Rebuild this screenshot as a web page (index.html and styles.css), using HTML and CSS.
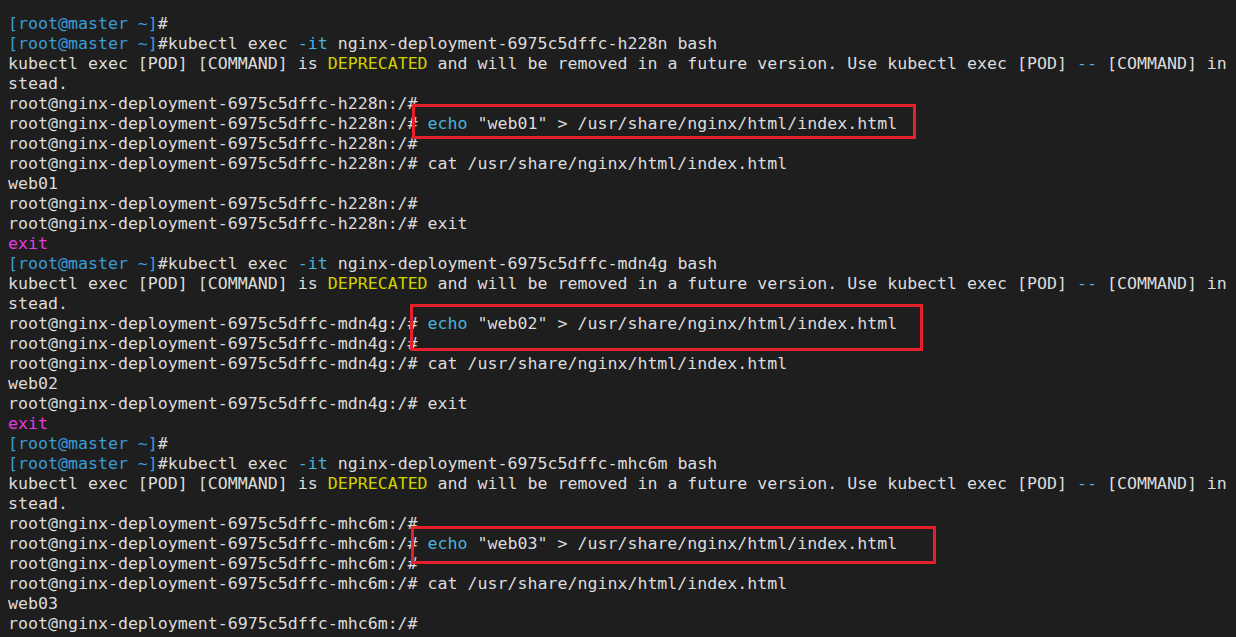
FILE: index.html
```html
<!DOCTYPE html>
<html lang="en">
<head>
  <meta charset="UTF-8">
  <title>terminal</title>
  <link rel="stylesheet" href="styles.css">
</head>
<body>

  <div class="term">
<div class="line"><span class="host">[root@master ~]</span>#</div>
<div class="line"><span class="host">[root@master ~]</span>#kubectl exec <span class="opt">-it</span> nginx-deployment-6975c5dffc-h228n bash</div>
<div class="line">kubectl exec [POD] [COMMAND] is <span class="warn">DEPRECATED</span> and will be removed in a future version. Use kubectl exec [POD] <span class="opt">--</span> [COMMAND] in</div>
<div class="line">stead.</div>
<div class="line">root@nginx-deployment-6975c5dffc-h228n:/#</div>
<div class="line">root@nginx-deployment-6975c5dffc-h228n:/# <span class="opt">echo</span> "web01" &gt; /usr/share/nginx/html/index.html</div>
<div class="line">root@nginx-deployment-6975c5dffc-h228n:/#</div>
<div class="line">root@nginx-deployment-6975c5dffc-h228n:/# cat /usr/share/nginx/html/index.html</div>
<div class="line">web01</div>
<div class="line">root@nginx-deployment-6975c5dffc-h228n:/#</div>
<div class="line">root@nginx-deployment-6975c5dffc-h228n:/# exit</div>
<div class="line"><span class="exit">exit</span></div>
<div class="line"><span class="host">[root@master ~]</span>#kubectl exec <span class="opt">-it</span> nginx-deployment-6975c5dffc-mdn4g bash</div>
<div class="line">kubectl exec [POD] [COMMAND] is <span class="warn">DEPRECATED</span> and will be removed in a future version. Use kubectl exec [POD] <span class="opt">--</span> [COMMAND] in</div>
<div class="line">stead.</div>
<div class="line">root@nginx-deployment-6975c5dffc-mdn4g:/# <span class="opt">echo</span> "web02" &gt; /usr/share/nginx/html/index.html</div>
<div class="line">root@nginx-deployment-6975c5dffc-mdn4g:/#</div>
<div class="line">root@nginx-deployment-6975c5dffc-mdn4g:/# cat /usr/share/nginx/html/index.html</div>
<div class="line">web02</div>
<div class="line">root@nginx-deployment-6975c5dffc-mdn4g:/# exit</div>
<div class="line"><span class="exit">exit</span></div>
<div class="line"><span class="host">[root@master ~]</span>#</div>
<div class="line"><span class="host">[root@master ~]</span>#kubectl exec <span class="opt">-it</span> nginx-deployment-6975c5dffc-mhc6m bash</div>
<div class="line">kubectl exec [POD] [COMMAND] is <span class="warn">DEPRECATED</span> and will be removed in a future version. Use kubectl exec [POD] <span class="opt">--</span> [COMMAND] in</div>
<div class="line">stead.</div>
<div class="line">root@nginx-deployment-6975c5dffc-mhc6m:/#</div>
<div class="line">root@nginx-deployment-6975c5dffc-mhc6m:/# <span class="opt">echo</span> "web03" &gt; /usr/share/nginx/html/index.html</div>
<div class="line">root@nginx-deployment-6975c5dffc-mhc6m:/#</div>
<div class="line">root@nginx-deployment-6975c5dffc-mhc6m:/# cat /usr/share/nginx/html/index.html</div>
<div class="line">web03</div>
<div class="line">root@nginx-deployment-6975c5dffc-mhc6m:/#</div>
<div class="line">root@nginx-deployment-6975c5dffc-mhc6m:/# exit</div>

    <!-- 标注框 -->
    <div class="mark mark1"></div>
    <div class="mark mark2"></div>
    <div class="mark mark3"></div>
  </div>

</body>
</html>
```

FILE: styles.css
```css
html, body {
  margin: 0;
  background: #1e1e1e;
  overflow: hidden;
}

.term {
  position: relative;
  padding: 14px 0 0 8px;
  height: 623px;
  font-family: "DejaVu Sans Mono", "Liberation Mono", monospace;
  font-size: 16.6px;
  line-height: 20px;
  color: #dcdcdc;
}

.line {
  white-space: pre;
  height: 20px;
}

.host { color: #3a9bd8; }
.opt  { color: #46b4dc; }
.warn { color: #d2d200; }
.exit { color: #e03ce0; }

/* 红色标注框 */
.mark {
  position: absolute;
  border: 3px solid #e5202a;
  box-sizing: border-box;
}

.mark1 { left: 412px; top: 104px; width: 504px; height: 35px; }
.mark2 { left: 410px; top: 304px; width: 513px; height: 47px; }
.mark3 { left: 411px; top: 526px; width: 525px; height: 38px; }
```
